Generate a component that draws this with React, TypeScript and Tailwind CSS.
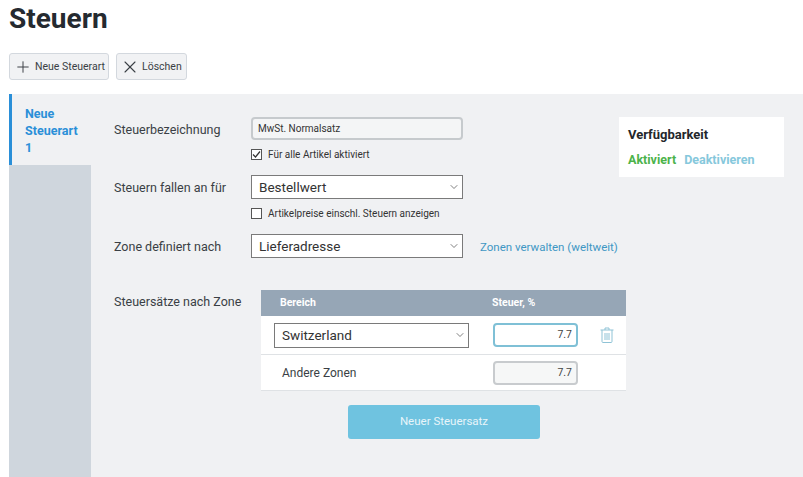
import { ChevronDown, Plus, X } from 'lucide-react';

function SelectBox({ value, className }: { value: string; className: string }) {
  return (
    <div className={`flex shrink-0 items-center justify-between border border-[#7a7a7a] bg-white pl-[7px] pr-[1px] text-[13.5px] text-[#333] ${className}`}>
      <span>{value}</span>
      <ChevronDown size={12} strokeWidth={1.5} className="mr-[1px] text-[#555]" />
    </div>
  );
}

function CheckRow({ label, checked }: { label: string; checked?: boolean }) {
  return (
    <div className="flex h-[14px] items-center gap-[6px] text-[10px] text-[#333]">
      <span className="flex h-[11px] w-[11px] items-center justify-center border border-[#555] bg-white">
        {checked && (
          <svg width="9" height="9" viewBox="0 0 9 9" fill="none" stroke="#333" strokeWidth="1.2">
            <path d="M1 4.5 3.5 7 8 1.5" />
          </svg>
        )}
      </span>
      <span>{label}</span>
    </div>
  );
}

function TrashIcon() {
  return (
    <svg width="14" height="16" viewBox="0 0 14 16" fill="none" stroke="#8fc3d6" strokeWidth="1" className="ml-[22px] shrink-0">
      <path d="M0.5 3h13M5 3V1h4v2M2 3v11.5a1 1 0 0 0 1 1h8a1 1 0 0 0 1-1V3" />
      <path d="M5 6v7M7 6v7M9 6v7" />
    </svg>
  );
}

export default function App() {
  return (
    <div className="h-[477px] w-[803px] overflow-hidden bg-white pl-[9px] font-['Roboto','Noto_Sans',sans-serif]">
      <h1 className="h-[53px] pt-[1px] text-[28px] leading-[36px] font-bold text-[#252a30]">Steuern</h1>

      <div className="flex h-[41px] gap-[7px]">
        <button className="flex h-[27px] w-[100px] items-center rounded-[3px] border border-[#d3d8de] bg-[#f1f2f4] pl-[4px] text-[10.5px] whitespace-nowrap text-[#3a3f45]">
          <Plus size={18} strokeWidth={1.3} className="mr-[3px] shrink-0" />
          Neue Steuerart
        </button>
        <button className="flex h-[27px] w-[71px] items-center rounded-[3px] border border-[#d3d8de] bg-[#f1f2f4] pl-[3px] text-[10.5px] text-[#3a3f45]">
          <X size={20} strokeWidth={1.3} className="mr-[2px] shrink-0" />
          Löschen
        </button>
      </div>

      <div className="flex h-[383px] bg-[#f0f1f3]">
        {/* Sidebar */}
        <div className="flex w-[82px] shrink-0 flex-col bg-[#cfd6dd]">
          <div className="h-[71px] border-l-[3px] border-[#2a8fd8] bg-[#f0f1f3] pt-[11px] pl-[13px] text-[12.5px] leading-[17px] font-bold text-[#2a8fd8]">
            Neue
            <br />
            Steuerart
            <br />1
          </div>
        </div>

        {/* Form */}
        <div className="w-[528px] shrink-0 pt-[23px] pl-[23px] text-[12.5px] text-[#3a3f45]">
          <div className="flex h-[58px]">
            <div className="w-[137px] shrink-0 pt-[4px] leading-[18px]">Steuerbezeichnung</div>
            <div>
              <div className="flex h-[23px] w-[212px] items-center rounded-[4px] border-2 border-[#c6cacd] bg-[#f4f5f6] pl-[5px] text-[10px] text-[#333]">
                MwSt. Normalsatz
              </div>
              <div className="mt-[7px]">
                <CheckRow label="Für alle Artikel aktiviert" checked />
              </div>
            </div>
          </div>

          <div className="flex h-[59px]">
            <div className="w-[137px] shrink-0 pt-[4px] leading-[18px]">Steuern fallen an für</div>
            <div>
              <SelectBox value="Bestellwert" className="h-[24px] w-[212px]" />
              <div className="mt-[7px]">
                <CheckRow label="Artikelpreise einschl. Steuern anzeigen" />
              </div>
            </div>
          </div>

          <div className="flex h-[56px]">
            <div className="w-[137px] shrink-0 pt-[4px] leading-[18px]">Zone definiert nach</div>
            <SelectBox value="Lieferadresse" className="h-[24px] w-[212px]" />
            <a className="ml-[17px] pt-[4px] text-[11.5px] leading-[18px] whitespace-nowrap text-[#3f97c4]">
              Zonen verwalten (weltweit)
            </a>
          </div>

          <div className="flex">
            <div className="w-[147px] shrink-0 pt-[3px] leading-[18px] whitespace-nowrap">Steuersätze nach Zone</div>
            <div className="w-[365px] shrink-0">
              <div className="flex h-[26px] items-center bg-[#96a6b6] text-[10.5px] font-bold text-white">
                <span className="w-[212px] pl-[19px]">Bereich</span>
                <span className="pl-[19px]">Steuer, %</span>
              </div>
              <div className="flex h-[39px] items-center border-b border-[#dfe2e5] bg-white pl-[13px]">
                <SelectBox value="Switzerland" className="h-[25px] w-[195px]" />
                <div className="ml-[24px] flex h-[24px] w-[85px] shrink-0 items-center justify-end rounded-[4px] border-2 border-[#7fc0d6] bg-white pr-[4px] text-[10.5px] text-[#444]">
                  7.7
                </div>
                <TrashIcon />
              </div>
              <div className="flex h-[36px] items-center border-b border-[#dfe2e5] bg-white pl-[21px]">
                <span className="w-[211px] shrink-0 text-[12px] text-[#3a3f45]">Andere Zonen</span>
                <div className="flex h-[24px] w-[85px] shrink-0 items-center justify-end rounded-[4px] border-2 border-[#c8cbce] bg-[#f6f7f7] pr-[4px] text-[10.5px] text-[#444]">
                  7.7
                </div>
              </div>
              <button className="mt-[14px] ml-[87px] h-[34px] w-[192px] rounded-[3px] bg-[#6fc3e0] text-[11.5px] text-[#e8f5fa]">
                Neuer Steuersatz
              </button>
            </div>
          </div>
        </div>

        {/* Availability card */}
        <div className="mt-[23px] h-[60px] w-[165px] shrink-0 bg-white pt-[8px] pl-[9px]">
          <div className="text-[13px] leading-[20px] font-bold text-[#23272b]">Verfügbarkeit</div>
          <div className="mt-[7px] flex gap-[8px] text-[12.5px] leading-[16px] font-bold">
            <span className="text-[#4cb34a]">Aktiviert</span>
            <span className="text-[#86c8dc]">Deaktivieren</span>
          </div>
        </div>
      </div>
    </div>
  );
}
